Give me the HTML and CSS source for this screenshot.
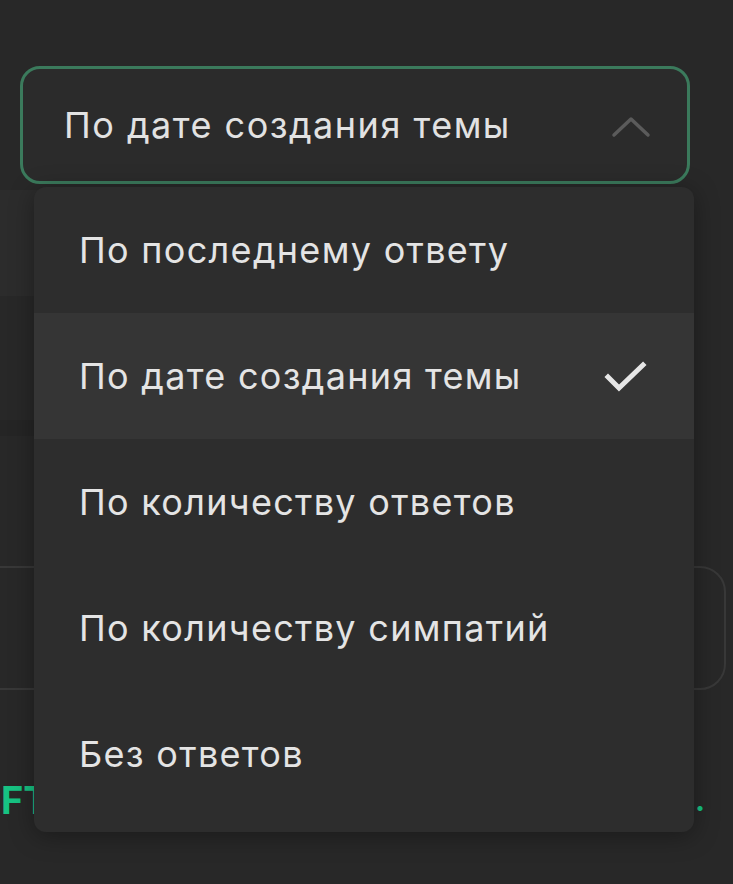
FILE: index.html
```html
<!DOCTYPE html>
<html lang="ru">
<head>
<meta charset="utf-8">
<link rel="stylesheet" href="styles.css">
</head>
<body>
<div class="page">
  <div class="select">
    <span class="select-label">По дате создания темы</span>
    <svg class="chevron" width="40" height="26" viewBox="0 0 40 26"><path d="M3 22 L20 6 L37 22" fill="none" stroke="#5b5b5b" stroke-width="3.5" stroke-linecap="round" stroke-linejoin="round"/></svg>
  </div>
  <div class="bg-content">
    <div class="bg-panel"></div>
    <div class="bg-sep"></div>
    <div class="bg-card"></div>
    <div class="bg-link"><span>FT</span><span class="dot">.</span></div>
  </div>
  <ul class="menu">
    <li class="item">По последнему ответу</li>
    <li class="item selected">По дате создания темы
      <svg class="check" width="44" height="34" viewBox="0 0 44 34"><path d="M4 17 L15 28 L39 5" fill="none" stroke="#e6e6e6" stroke-width="5" stroke-linecap="square" stroke-linejoin="miter"/></svg>
    </li>
    <li class="item">По количеству ответов</li>
    <li class="item">По количеству симпатий</li>
    <li class="item">Без ответов</li>
  </ul>
</div>
</body>
</html>
```
FILE: styles.css
```css
* { box-sizing: border-box; }
html, body { margin: 0; padding: 0; }
body {
  background: #282828;
  font-family: Inter, "Noto Sans", sans-serif;
  color: #e4e4e4;
  width: 733px;
  height: 884px;
  overflow: hidden;
}
.page {
  position: relative;
  padding-top: 66px;
  height: 884px;
}
.select {
  margin-left: 20px;
  width: 670px;
  height: 118px;
  border: 3px solid #3b7a5c;
  border-radius: 20px;
  background: #2b2b2b;
  display: flex;
  align-items: center;
  justify-content: space-between;
  padding: 0 36px 0 41px;
}
.select-label {
  font-size: 36px;
  letter-spacing: 1.5px;
  color: #e2e2e2;
}
.chevron { margin-top: 2px; }
.bg-content {
  display: flex;
  flex-direction: column;
}
.bg-panel {
  margin-top: 6px;
  height: 106px;
  width: 690px;
  background: #2c2c2c;
}
.bg-sep {
  margin-top: 124px;
  height: 16px;
  width: 690px;
  background: #252525;
}
.bg-card {
  margin-top: 130px;
  margin-left: -30px;
  width: 756px;
  height: 124px;
  border: 2px solid #383838;
  border-radius: 26px;
}
.bg-link {
  margin-top: 90px;
  display: flex;
  justify-content: space-between;
  padding: 0 28px 0 1px;
  color: #17c383;
  font-weight: 700;
  font-size: 38px;
  line-height: 40px;
}
.dot { font-size: 30px; }
.menu {
  position: absolute;
  top: 187px;
  left: 34px;
  width: 660px;
  margin: 0;
  padding: 0 0 15px;
  list-style: none;
  background: #2d2d2d;
  border-radius: 12px;
  box-shadow: 0 4px 24px rgba(0,0,0,0.35);
  overflow: hidden;
}
.item {
  height: 126px;
  display: flex;
  align-items: center;
  justify-content: space-between;
  padding: 0 46px 0 45px;
  font-size: 36px;
  letter-spacing: 1.3px;
  color: #e4e4e4;
}
.item.selected { background: #353535; }
.check { margin-top: 2px; }
```
